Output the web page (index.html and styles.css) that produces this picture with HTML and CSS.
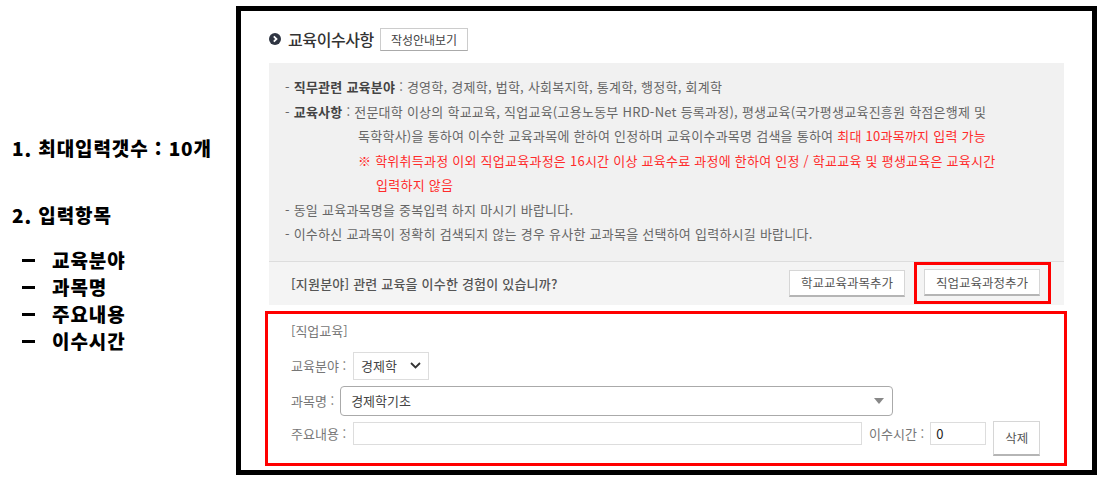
FILE: index.html
```html
<!DOCTYPE html>
<html lang="ko">
<head>
  <meta charset="UTF-8">
  <title>교육이수사항</title>
  <link rel="stylesheet" href="styles.css">
</head>
<body>
  <div class="page">
    <!-- 설명 메모 -->
    <div class="notes">
      <p class="note-title">1. 최대입력갯수 : 10개</p>
      <p class="note-title note-gap">2. 입력항목</p>
      <ul class="note-list">
        <li>교육분야</li>
        <li>과목명</li>
        <li>주요내용</li>
        <li>이수시간</li>
      </ul>
    </div>

    <!-- 교육이수사항 화면 -->
    <div class="frame">
      <div class="section-head">
        <span class="head-icon">
          <svg width="12" height="12" viewBox="0 0 12 12"><circle cx="6" cy="6" r="6" fill="#2f3542"/><path d="M4.8 3.3 L7.5 6 L4.8 8.7" fill="none" stroke="#fff" stroke-width="1.8"/></svg>
        </span>
        <h2>교육이수사항</h2>
        <button class="btn-guide">작성안내보기</button>
      </div>

      <div class="guide-box">
        <p>- <b>직무관련 교육분야</b> : 경영학, 경제학, 법학, 사회복지학, 통계학, 행정학, 회계학</p>
        <p>- <b>교육사항</b> : 전문대학 이상의 학교교육, 직업교육(고용노동부 HRD-Net 등록과정), 평생교육(국가평생교육진흥원 학점은행제 및</p>
        <p class="cont">독학학사)을 통하여 이수한 교육과목에 한하여 인정하며 교육이수과목명 검색을 통하여 <span class="red">최대 10과목까지 입력 가능</span></p>
        <p class="cont red">※ 학위취득과정 이외 직업교육과정은 16시간 이상 교육수료 과정에 한하여 인정 / 학교교육 및 평생교육은 교육시간</p>
        <p class="cont red sub">입력하지 않음</p>
        <p>- 동일 교육과목명을 중복입력 하지 마시기 바랍니다.</p>
        <p>- 이수하신 교과목이 정확히 검색되지 않는 경우 유사한 교과목을 선택하여 입력하시길 바랍니다.</p>
      </div>

      <div class="question-row">
        <span class="question">[지원분야] 관련 교육을 이수한 경험이 있습니까?</span>
        <div class="question-actions">
          <button class="btn">학교교육과목추가</button>
          <span class="mark"><button class="btn">직업교육과정추가</button></span>
        </div>
      </div>

      <div class="entry">
        <p class="entry-title">[직업교육]</p>
        <div class="entry-row">
          <span class="label">교육분야 :</span>
          <span class="select-box">경제학
            <svg width="11" height="7" viewBox="0 0 11 7"><path d="M1 1 L5.5 5.5 L10 1" fill="none" stroke="#333" stroke-width="1.8"/></svg>
          </span>
        </div>
        <div class="entry-row">
          <span class="label">과목명 :</span>
          <span class="combo-box">경제학기초
            <svg width="10" height="6" viewBox="0 0 10 6"><path d="M0 0 L10 0 L5 6 Z" fill="#888"/></svg>
          </span>
        </div>
        <div class="entry-row last">
          <span class="label">주요내용 :</span>
          <span class="text-input wide"></span>
          <span class="label hours">이수시간 :</span>
          <span class="text-input small">0</span>
          <button class="btn btn-del">삭제</button>
        </div>
      </div>
    </div>
  </div>
</body>
</html>
```

FILE: styles.css
```css
body {
  margin: 0;
  background: #fff;
  font-family: "Noto Sans CJK KR", "Noto Sans", sans-serif;
}

.page {
  display: flex;
  width: 1103px;
  height: 483px;
}

/* 왼쪽 메모 */
.notes {
  width: 236px;
  padding: 133px 0 0 12px;
  box-sizing: border-box;
  font-weight: 900;
  font-size: 19px;
  color: #000;
  letter-spacing: 0.9px;
}

.note-title {
  margin: 0;
  line-height: 30px;
}

.note-gap {
  margin-top: 37px;
}

.note-list {
  list-style: none;
  margin: 16px 0 0;
  padding: 0;
}

.note-list li {
  position: relative;
  padding-left: 40px;
  line-height: 27px;
}

.note-list li::before {
  content: "";
  position: absolute;
  left: 10px;
  top: 13px;
  width: 13px;
  height: 3px;
  background: #000;
}

/* 오른쪽 화면 */
.frame {
  width: 861px;
  height: 469px;
  margin-top: 6px;
  border: 5px solid #000;
  box-sizing: border-box;
  padding: 17px 28px 0 28px;
  font-size: 13px;
  color: #666;
}

.section-head {
  display: flex;
  align-items: center;
  height: 22px;
}

.head-icon {
  display: flex;
  margin-right: 7px;
}

.section-head h2 {
  margin: 0 6px 0 0;
  font-size: 16px;
  font-weight: 500;
  color: #333;
  letter-spacing: -0.4px;
}

.btn-guide {
  height: 23px;
  padding: 0 10px;
  border: 1px solid #ccc;
  border-bottom-color: #aaa;
  background: #fff;
  font-family: inherit;
  font-size: 12px;
  color: #444;
}

.guide-box {
  margin-top: 13px;
  background: #f1f1f1;
  padding: 12px 16px 14px;
  border-bottom: 1px solid #ddd;
  letter-spacing: 0.25px;
}

.guide-box p {
  margin: 0;
  line-height: 24.5px;
  white-space: nowrap;
}

.guide-box b {
  color: #444;
  font-weight: 700;
}

.guide-box .cont {
  margin-left: 73px;
}

.guide-box .sub {
  margin-left: 91px;
}

.red {
  color: #ff2b2b;
}

.question-row {
  display: flex;
  align-items: center;
  justify-content: space-between;
  height: 43px;
  background: #f4f4f4;
  padding: 0 13px 0 22px;
}

.question {
  color: #555;
  font-weight: 500;
  letter-spacing: 0.2px;
}

.question-actions {
  display: flex;
  align-items: center;
  gap: 9px;
}

.btn {
  height: 27px;
  padding: 0 12px;
  border: 1px solid #d6d6d6;
  border-bottom: 2px solid #b5b5b5;
  background: #fff;
  font-family: inherit;
  font-size: 12.5px;
  color: #555;
  white-space: nowrap;
  box-sizing: border-box;
}

.question-actions .btn {
  width: 116px;
  padding: 0;
}

.mark {
  display: flex;
  border: 3px solid #f00;
  padding: 4px 8px 5px 7px;
}

/* 직업교육 입력 영역 */
.entry {
  margin: 6px -3px 0 -4px;
  height: 155px;
  border: 3px solid #f00;
  box-sizing: border-box;
  padding: 7px 0 0 23px;
  color: #777;
}

.entry-title {
  margin: 0;
  line-height: 20px;
}

.entry-row {
  display: flex;
  align-items: center;
  margin-top: 11px;
}

.entry-row + .entry-row {
  margin-top: 6px;
}

.label {
  margin-right: 7px;
}

.select-box {
  display: flex;
  align-items: center;
  justify-content: space-between;
  width: 76px;
  height: 28px;
  padding: 0 7px;
  border: 1px solid #ddd;
  box-sizing: border-box;
  background: #fff;
  color: #444;
}

.combo-box {
  display: flex;
  align-items: center;
  justify-content: space-between;
  width: 553px;
  height: 30px;
  margin-left: -1px;
  padding: 0 8px 0 10px;
  border: 1px solid #aaa;
  border-radius: 4px;
  box-sizing: border-box;
  background: #fff;
  color: #444;
}

.entry-row.last {
  align-items: flex-start;
}

.entry-row.last .label {
  line-height: 23px;
}

.text-input {
  height: 23px;
  border: 1px solid #ddd;
  box-sizing: border-box;
  background: #fff;
  color: #222;
  line-height: 21px;
  padding-left: 5px;
}

.text-input.wide {
  width: 509px;
  margin-right: 7px;
}

.text-input.small {
  width: 56px;
}

.label.hours {
  margin-right: 6px;
}

.btn-del {
  width: 47px;
  height: 35px;
  margin-left: 7px;
  margin-top: -1px;
  padding: 0;
}
```
